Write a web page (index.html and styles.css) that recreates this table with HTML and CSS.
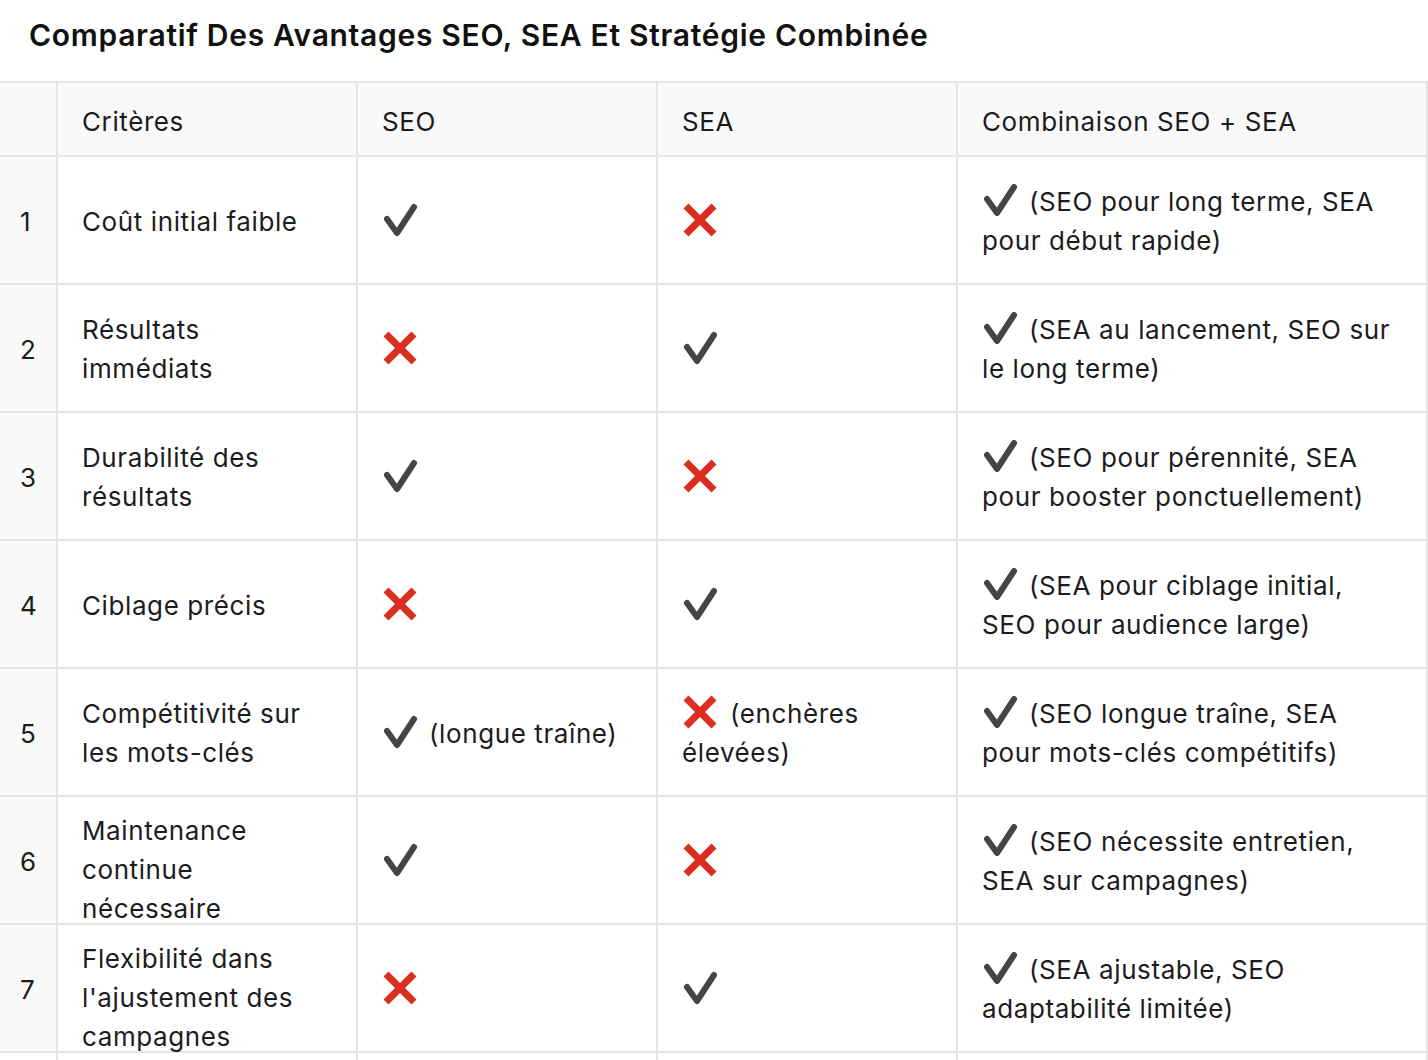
FILE: index.html
```html
<!DOCTYPE html>
<html lang="fr">
<head>
<meta charset="utf-8">
<title>Comparatif SEO SEA</title>
<link rel="stylesheet" href="styles.css">
</head>
<body>
<div class="page">
  <h1 class="title">Comparatif Des Avantages SEO, SEA Et Stratégie Combinée</h1>
  <div class="table">
    <div class="row head">
      <div class="cell idx"></div>
      <div class="cell">Critères</div>
      <div class="cell">SEO</div>
      <div class="cell">SEA</div>
      <div class="cell">Combinaison SEO + SEA</div>
    </div>

    <div class="row">
      <div class="cell idx">1</div>
      <div class="cell">Coût initial faible</div>
      <div class="cell"><span class="txt"><svg class="ic chk" viewBox="0 0 36 36"><path d="M5 17 L15 31 L32 5"/></svg></span></div>
      <div class="cell"><span class="txt"><svg class="ic x" viewBox="0 0 36 36"><path d="M4 4 L32 32 M32 4 L4 32"/></svg></span></div>
      <div class="cell"><span class="txt"><svg class="ic chk" viewBox="0 0 36 36"><path d="M5 17 L15 31 L32 5"/></svg>(SEO pour long terme, SEA pour début rapide)</span></div>
    </div>

    <div class="row">
      <div class="cell idx">2</div>
      <div class="cell">Résultats immédiats</div>
      <div class="cell"><span class="txt"><svg class="ic x" viewBox="0 0 36 36"><path d="M4 4 L32 32 M32 4 L4 32"/></svg></span></div>
      <div class="cell"><span class="txt"><svg class="ic chk" viewBox="0 0 36 36"><path d="M5 17 L15 31 L32 5"/></svg></span></div>
      <div class="cell"><span class="txt"><svg class="ic chk" viewBox="0 0 36 36"><path d="M5 17 L15 31 L32 5"/></svg>(SEA au lancement, SEO sur le long terme)</span></div>
    </div>

    <div class="row">
      <div class="cell idx">3</div>
      <div class="cell">Durabilité des résultats</div>
      <div class="cell"><span class="txt"><svg class="ic chk" viewBox="0 0 36 36"><path d="M5 17 L15 31 L32 5"/></svg></span></div>
      <div class="cell"><span class="txt"><svg class="ic x" viewBox="0 0 36 36"><path d="M4 4 L32 32 M32 4 L4 32"/></svg></span></div>
      <div class="cell"><span class="txt"><svg class="ic chk" viewBox="0 0 36 36"><path d="M5 17 L15 31 L32 5"/></svg>(SEO pour pérennité, SEA pour booster ponctuellement)</span></div>
    </div>

    <div class="row">
      <div class="cell idx">4</div>
      <div class="cell">Ciblage précis</div>
      <div class="cell"><span class="txt"><svg class="ic x" viewBox="0 0 36 36"><path d="M4 4 L32 32 M32 4 L4 32"/></svg></span></div>
      <div class="cell"><span class="txt"><svg class="ic chk" viewBox="0 0 36 36"><path d="M5 17 L15 31 L32 5"/></svg></span></div>
      <div class="cell"><span class="txt"><svg class="ic chk" viewBox="0 0 36 36"><path d="M5 17 L15 31 L32 5"/></svg>(SEA pour ciblage initial, SEO pour audience large)</span></div>
    </div>

    <div class="row">
      <div class="cell idx">5</div>
      <div class="cell">Compétitivité sur les mots-clés</div>
      <div class="cell"><span class="txt"><svg class="ic chk" viewBox="0 0 36 36"><path d="M5 17 L15 31 L32 5"/></svg>(longue traîne)</span></div>
      <div class="cell"><span class="txt"><svg class="ic x" viewBox="0 0 36 36"><path d="M4 4 L32 32 M32 4 L4 32"/></svg>(enchères élevées)</span></div>
      <div class="cell"><span class="txt"><svg class="ic chk" viewBox="0 0 36 36"><path d="M5 17 L15 31 L32 5"/></svg>(SEO longue traîne, SEA pour mots-clés compétitifs)</span></div>
    </div>

    <div class="row">
      <div class="cell idx">6</div>
      <div class="cell">Maintenance continue nécessaire</div>
      <div class="cell"><span class="txt"><svg class="ic chk" viewBox="0 0 36 36"><path d="M5 17 L15 31 L32 5"/></svg></span></div>
      <div class="cell"><span class="txt"><svg class="ic x" viewBox="0 0 36 36"><path d="M4 4 L32 32 M32 4 L4 32"/></svg></span></div>
      <div class="cell"><span class="txt"><svg class="ic chk" viewBox="0 0 36 36"><path d="M5 17 L15 31 L32 5"/></svg>(SEO nécessite entretien, SEA sur campagnes)</span></div>
    </div>

    <div class="row">
      <div class="cell idx">7</div>
      <div class="cell">Flexibilité dans l'ajustement des campagnes</div>
      <div class="cell"><span class="txt"><svg class="ic x" viewBox="0 0 36 36"><path d="M4 4 L32 32 M32 4 L4 32"/></svg></span></div>
      <div class="cell"><span class="txt"><svg class="ic chk" viewBox="0 0 36 36"><path d="M5 17 L15 31 L32 5"/></svg></span></div>
      <div class="cell"><span class="txt"><svg class="ic chk" viewBox="0 0 36 36"><path d="M5 17 L15 31 L32 5"/></svg>(SEA ajustable, SEO adaptabilité limitée)</span></div>
    </div>

    <div class="row">
      <div class="cell idx blank"></div>
      <div class="cell"></div>
      <div class="cell"></div>
      <div class="cell"></div>
      <div class="cell"></div>
    </div>
  </div>
</div>
</body>
</html>
```

FILE: styles.css
```css
html, body {
  margin: 0;
  padding: 0;
  background: #ffffff;
}

body {
  font-family: "Inter", "Liberation Sans", sans-serif;
  color: #1c1c1e;
  overflow: hidden;
}

.page {
  width: 1428px;
  height: 1060px;
  overflow: hidden;
}

.title {
  margin: 0;
  height: 81px;
  box-sizing: border-box;
  padding: 15px 29px 0;
  font-size: 30px;
  line-height: 40px;
  font-weight: 600;
  color: #111111;
  letter-spacing: 0.7px;
}

.table {
  border-top: 2px solid #e6e6e6;
}

.row {
  display: grid;
  grid-template-columns: 58px 300px 300px 300px 470px;
  grid-template-rows: 126px;
  height: 128px;
  box-sizing: border-box;
  border-bottom: 2px solid #e6e6e6;
}

.row.head {
  grid-template-rows: 72px;
  height: 74px;
  background: #f9f9f9;
}

.row.head .cell {
  padding-top: 16px;
  padding-bottom: 12px;
}

.cell {
  display: flex;
  align-items: safe center;
  box-sizing: border-box;
  padding: 14px 23px 12px 24px;
  border-right: 2px solid #e6e6e6;
  font-size: 26px;
  line-height: 39px;
  letter-spacing: 0.6px;
  min-width: 0;
  min-height: 0;
}

.cell.idx {
  padding: 14px 0 12px 20px;
  background: #f9f9f9;
}

.cell.idx.blank {
  background: #ffffff;
}

.txt {
  display: block;
}

.ic {
  display: inline-block;
  vertical-align: -7px;
  margin-right: 11px;
}

.ic.chk {
  width: 36px;
  height: 36px;
}

.ic.chk path {
  fill: none;
  stroke: #454545;
  stroke-width: 6;
  stroke-linecap: round;
  stroke-linejoin: round;
}

.ic.x {
  width: 36px;
  height: 36px;
  margin-right: 12px;
}

.ic.x path {
  fill: none;
  stroke: #dc2d1f;
  stroke-width: 7;
  stroke-linecap: butt;
}
```
